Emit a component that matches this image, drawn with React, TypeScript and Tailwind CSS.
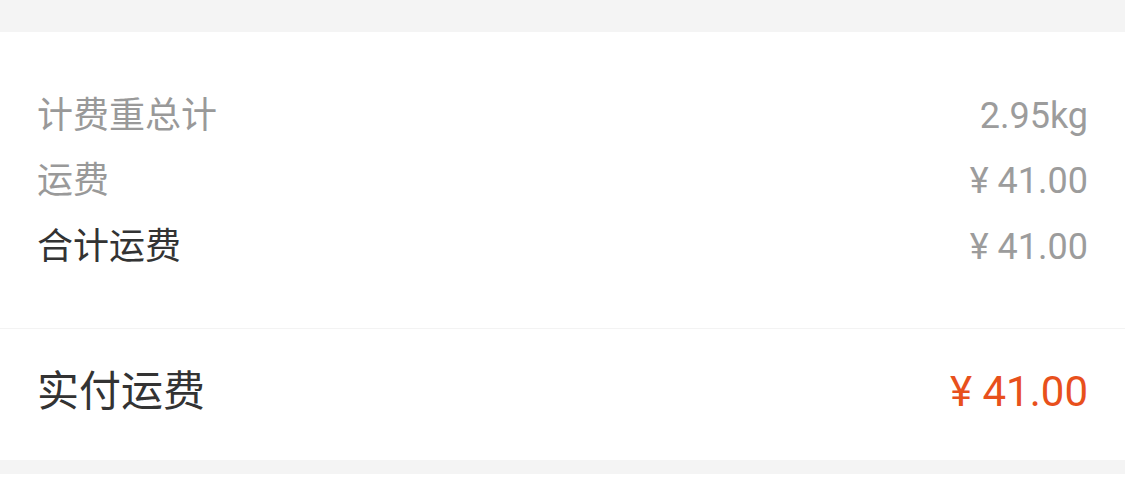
const font = "font-['Roboto','Noto_Sans_CJK_SC',sans-serif]"

const rows = [
  { label: '计费重总计', value: '2.95kg', labelClass: 'text-[#999999]' },
  { label: '运费', value: '¥ 41.00', labelClass: 'text-[#999999]' },
  { label: '合计运费', value: '¥ 41.00', labelClass: 'text-[#333333]' },
]

const App = () => {
  return (
    <div className={`flex min-h-[486px] w-full flex-col bg-white ${font}`}>
      <div className="h-[32px] bg-[#f4f4f4]"></div>

      {/* Fee detail rows */}
      <div className="flex flex-col px-[37px] pb-[48px] pt-[51px]">
        {rows.map((row) => (
          <div
            key={row.label}
            className="flex h-[65.5px] items-center justify-between text-[36px]"
          >
            <span className={row.labelClass}>{row.label}</span>
            <span className="text-[#9c9c9c]">{row.value}</span>
          </div>
        ))}
      </div>

      <div className="h-px bg-[#f3f3f3]"></div>

      {/* Paid total */}
      <div className="flex h-[131px] items-center justify-between px-[37px] pb-[6px]">
        <span className="text-[42px] text-[#333333]">实付运费</span>
        <span className="text-[42px] text-[#e8501c]">¥ 41.00</span>
      </div>

      <div className="h-[14px] bg-[#f4f4f4]"></div>
    </div>
  )
}

export default App
